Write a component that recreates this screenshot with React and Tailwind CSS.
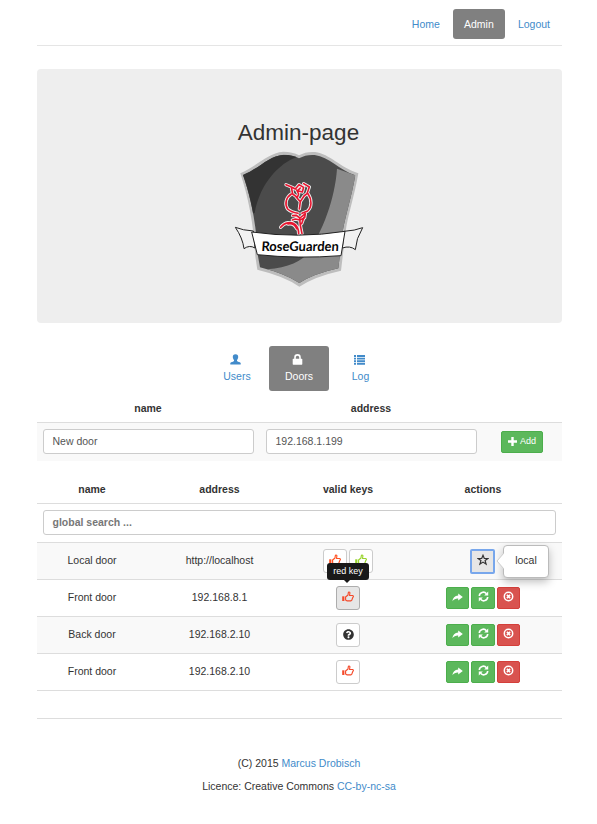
import React from "react";
import { FaQuestionCircle } from "react-icons/fa";

const link = "text-[#428bca]";

function Thumb({ color }) {
  return (
    <svg width="12" height="12" viewBox="0 0 12 12" fill="none" stroke={color}>
      <path d="M0.200 5.300h2.200v4.700h-2.200z" fill={color} stroke="none" />
      <path d="M3.600 6 6 4 6.300 1.700C6.400.700 8 .700 7.900 2L7.500 4.500H10.700C11.600 4.700 11.600 5.800 10.900 6.200L9.700 9.400 9 9.900H5.200L3.600 9Z" strokeWidth="1.150" strokeLinejoin="round" />
    </svg>
  );
}

function Share() {
  return (
    <svg width="11" height="11" viewBox="0 0 11 11" fill="#fff">
      <path d="M6.200 1.500 10.800 5.100 6.200 8.600V6.600C3.700 6.500 1.900 7.300.400 9.300.700 6 2.800 3.800 6.200 3.600Z" />
    </svg>
  );
}

function Star() {
  return (
    <svg width="12" height="12" viewBox="0 0 12 12" fill="none" stroke="#333" strokeWidth="1.200">
      <path d="M6 1.300 7.300 4.500H10.900L8.100 6.600 9.100 10.100 6 8.100 2.900 10.100 3.900 6.600 1.100 4.500H4.700Z" />
    </svg>
  );
}

function Refresh() {
  return (
    <svg width="11" height="11" viewBox="0 0 11 11" fill="none" stroke="#fff" strokeWidth="1.600">
      <path d="M1.300 5A4 4 0 0 1 8.400 2.700M9.700 6A4 4 0 0 1 2.600 8.300" />
      <path d="M10.200.500v4H6.200zM.800 10.500V6.500h4z" fill="#fff" stroke="none" />
    </svg>
  );
}

function RemoveCircle() {
  return (
    <svg width="11" height="11" viewBox="0 0 11 11" fill="none" stroke="#fff">
      <circle cx="5.500" cy="5.500" r="4.200" strokeWidth="1.500" />
      <path d="m3.900 3.900 3.200 3.200m0-3.200L3.900 7.100" strokeWidth="1.600" />
    </svg>
  );
}

function UserIcon() {
  return (
    <svg width="11" height="11" viewBox="0 0 11 11" fill="#428bca">
      <path d="M5.500.200C3.500.200 2.700 1.400 2.800 3c.1 1.400.6 2.300 1.200 3v1C3.500 7.700 1 8 .300 9v1.500h10.400V9C10 8 7.500 7.700 7 7V6c.6-.7 1.100-1.600 1.200-3C8.300 1.400 7.500.200 5.500.200Z" />
    </svg>
  );
}

function LockIcon() {
  return (
    <svg width="11" height="11" viewBox="0 0 11 11">
      <path d="M3 5.500V3.400a2.500 2.500 0 0 1 5 0v2.100" fill="none" stroke="#fff" strokeWidth="1.600" />
      <rect x="0.700" y="4.800" width="9.600" height="5.900" rx="0.600" fill="#fff" />
    </svg>
  );
}

function ListIcon() {
  return (
    <svg width="11" height="11" viewBox="0 0 11 11" fill="#428bca">
      <path d="M0 1h2v2H0zM3 1h8v2H3zM0 3.700h2v1.800H0zM3 3.700h8v1.800H3zM0 6.300h2V8H0zM3 6.300h8V8H3zM0 8.800h2v1.900H0zM3 8.800h8v1.900H3z" />
    </svg>
  );
}

const rose =
  "M168 110 184 117 188 138 202 148 206 138 200 126M184 117 196 123 207 110 221 118 217 132 203 128 211 120M221 107 238 117 231 137 222 144 211 161 198 146M211 161 208 183M184 138C168 148 163 168 173 183Q184 193 204 196M234 137C246 154 246 178 233 189L216 196M188 203 199 202 210 210 226 197 224 209 210 216 196 213 187 216M209 212 211 232 216 257M222 208 215 227M152 238C164 222 184 220 196 230Q206 240 206 257M174 228Q192 224 200 242";

function Logo() {
  return (
    <svg className="mr-px block" width="130" height="138" viewBox="12 6 390 414">
      <defs>
        <clipPath id="shield">
          <path d="M39 81C91 59 116 24 161 20Q188 20 207 31Q228 19 254 21C298 27 326 65 376 82C364 150 347 200 338 250L325 361Q252 377 208 405Q165 377 90 358L84 325C78 220 62 146 39 81Z" />
        </clipPath>
      </defs>
      <path d="M31 76C85 52 112 15 160 11Q188 11 207 22Q228 10 255 12C300 18 330 58 385 76C372 150 354 200 347 250L333 368Q255 385 208 416Q165 385 82 365L76 325C70 220 54 146 31 76Z" fill="#bdbdbd" />
      <g clipPath="url(#shield)">
        <rect x="20" y="0" width="380" height="420" fill="#4b4b4b" />
        <path d="M20 0H215L199 28C150 45 90 105 74 195L20 200Z" fill="#333" />
        <path d="M321 62 400 90V420H60V364C140 370 200 350 228 322C280 250 315 150 321 62Z" fill="#8a8a8a" />
      </g>
      <g fill="none" strokeLinejoin="round" strokeLinecap="round">
        <path d={rose} stroke="#f0f0f0" strokeWidth="10" />
        <path d={rose} stroke="#e8152f" strokeWidth="4.800" />
      </g>
      <g fill="#f2f2f2" stroke="#222" strokeWidth="3" strokeLinejoin="round">
        <path d="M16 238Q38 247 70 249L75 300Q58 290 42 302Q38 270 16 238Z" />
        <path d="M398 239Q375 248 342 250L337 300Q360 292 376 305Q378 272 398 239Z" />
        <path d="M65 252Q205 272 345 250L333 323Q205 333 82 320Z" fill="#fff" />
      </g>
      <text x="115" y="308" transform="skewX(-4)" textLength="232" lengthAdjust="spacingAndGlyphs" fontFamily="Lato, sans-serif" fontSize="40" fontWeight="700" fill="#050505">RoseGuarden</text>
    </svg>
  );
}

function KeyButton({ active, children, tip }) {
  return (
    <button className={"relative flex size-6 items-center justify-center rounded-[3px] border pb-[2px] " + (active ? "border-[#adadad] bg-[#e6e6e6]" : "border-[#ccc] bg-white")}>
      {children}
      {tip && (
        <span className="absolute bottom-[29px] left-1/2 z-10 flex h-[17px] w-[42px] -translate-x-1/2 items-center justify-center whitespace-nowrap rounded-[3px] bg-[#191919] text-[9px] text-white">
          {tip}
          <svg className="absolute -bottom-[3px] left-[16px]" width="8" height="4" viewBox="0 0 8 4"><path d="M0 0h8L4 4z" fill="#191919" /></svg>
        </span>
      )}
    </button>
  );
}

function Actions() {
  return (
    <div className="flex gap-[2px]">
      <button className="flex h-[22px] w-[23px] items-center justify-center rounded-[2px] border border-[#4cae4c] bg-[#5cb85c] pb-[2px]"><Share /></button>
      <button className="flex h-[22px] w-6 items-center justify-center rounded-[2px] border border-[#4cae4c] bg-[#5cb85c] pb-[3px]"><Refresh /></button>
      <button className="flex h-[22px] w-[23px] items-center justify-center rounded-[2px] border border-[#d43f3a] bg-[#d9534f] pb-[3px]"><RemoveCircle /></button>
    </div>
  );
}

function Row({ name, address, keys, actions, striped }) {
  return (
    <div className={"grid h-[37px] grid-cols-[110px_145px_112px_158px] items-center border-t border-[#ddd] text-center " + (striped ? "bg-[#f9f9f9]" : "bg-white")}>
      <div className="pb-[2px]">{name}</div>
      <div className="pb-[2px]">{address}</div>
      <div className="flex justify-center gap-[2px]">{keys}</div>
      <div className="flex justify-center">{actions}</div>
    </div>
  );
}

export default function App() {
  return (
    <div className="h-[824px] w-[597px] overflow-hidden bg-white pl-[37px] pr-[35px] pt-[9px] font-['Liberation_Sans',Arial,sans-serif] text-[10.5px] leading-[15px] text-[#333]">
      <nav className="flex h-[37px] items-start justify-end gap-[2px] border-b border-[#e5e5e5] pr-px">
        <a className={"flex h-[30px] items-center px-[11px] " + link}>Home</a>
        <a className="flex h-[30px] w-[52px] items-center justify-center rounded-[3px] bg-[#808080] text-white">Admin</a>
        <a className={"flex h-[30px] items-center px-[11px] " + link}>Logout</a>
      </nav>

      <header className="mt-[23px] flex h-[254px] flex-col items-center rounded-[4px] bg-[#eee] pt-[50px]">
        <h1 className="mr-[2px] h-[31px] text-[22.5px] leading-[27px]">Admin-page</h1>
        <Logo />
      </header>

      <div className="mt-[23px] flex h-[45px] gap-[2px] pl-[170px]">
        <a className={"flex w-[60px] flex-col items-center pt-[8px] " + link}><span className="-ml-[3px]"><UserIcon /></span><span className="mt-[4px]">Users</span></a>
        <a className="flex w-[60px] flex-col items-center rounded-[3px] bg-[#808080] pt-[8px] text-white"><span className="-ml-[4px]"><LockIcon /></span><span className="mt-[4px]">Doors</span></a>
        <a className={"flex w-[59px] flex-col items-center pt-[8px] " + link}><span className="-ml-[3px]"><ListIcon /></span><span className="mt-[4px]">Log</span></a>
      </div>

      <section className="h-[70px]">
        <div className="grid h-[31px] grid-cols-[222px_224px_79px] pt-[10px] text-center font-bold">
          <div>name</div>
          <div>address</div>
        </div>
        <div className="grid h-[39px] grid-cols-[223px_223px_79px] items-start border-t border-[#ddd] bg-[#f9f9f9] pt-[6px] text-[#555]">
          <div className="ml-[6px] flex h-[25px] w-[211px] items-center rounded-[3px] border border-[#ccc] bg-white px-[8.5px] pb-px">New door</div>
          <div className="ml-[6px] flex h-[25px] w-[211px] items-center rounded-[3px] border border-[#ccc] bg-white px-[8.5px] pb-px">192.168.1.199</div>
          <button className="ml-[18px] mt-[2px] flex h-[22px] w-[42px] items-center justify-center gap-[3px] rounded-[2px] border border-[#4cae4c] bg-[#5cb85c] pb-[2px] text-[9px] text-white">
            <svg width="9" height="9" viewBox="0 0 9 9"><path d="M3.300 0h2.400v3.300H9v2.400H5.700V9H3.300V5.700H0V3.300h3.300z" fill="#fff" /></svg>
            Add
          </button>
        </div>
      </section>

      <section className="mt-[11px]">
        <div className="grid h-[31px] grid-cols-[110px_145px_112px_158px] pt-[10px] text-center font-bold">
          <div>name</div>
          <div>address</div>
          <div>valid keys</div>
          <div>actions</div>
        </div>
        <div className="flex h-[39px] items-start border-t border-[#ddd] px-[6px] pt-[6px]">
          <div className="flex h-[25px] w-full items-center rounded-[3px] border border-[#ccc] px-[8.5px] pb-px font-bold text-[#777]">global search ...</div>
        </div>
        <Row
          striped
          name="Local door"
          address="http://localhost"
          keys={<><KeyButton><Thumb color="#ff4f20" /></KeyButton><KeyButton><Thumb color="#98d32b" /></KeyButton></>}
          actions={
            <button className="relative mr-px flex size-[25px] items-center justify-center rounded-[2px] border-2 border-[#78a7ec] bg-[#e6e6e6] pb-[2px]">
              <Star />
              <span className="absolute -top-[6px] left-[31px] z-10 flex h-[33px] w-[46px] items-center justify-center rounded-[4px] border border-[#bbb] bg-white pb-[2px] shadow-[0_4px_8px_rgba(0,0,0,0.25)]">
                local
                <svg className="absolute -left-[8px] top-[7px]" width="8" height="16" viewBox="0 0 8 16"><path d="M8 0 1 8l7 8" fill="#fff" stroke="#ccc" strokeWidth="1" /></svg>
              </span>
            </button>
          }
        />
        <Row name="Front door" address="192.168.8.1" keys={<KeyButton active tip="red key"><Thumb color="#f44a2b" /></KeyButton>} actions={<Actions />} />
        <Row striped name="Back door" address="192.168.2.10" keys={<KeyButton><FaQuestionCircle size={11} /></KeyButton>} actions={<Actions />} />
        <Row name="Front door" address="192.168.2.10" keys={<KeyButton><Thumb color="#f44a2b" /></KeyButton>} actions={<Actions />} />
        <div className="h-[29px] border-y border-[#ddd]" />
      </section>

      <footer className="mt-[37px] pr-px text-center">
        <p>(C) 2015 <a className={link}>Marcus Drobisch</a></p>
        <p className="mt-[8px]">Licence: Creative Commons <a className={link}>CC-by-nc-sa</a></p>
      </footer>
    </div>
  );
}
